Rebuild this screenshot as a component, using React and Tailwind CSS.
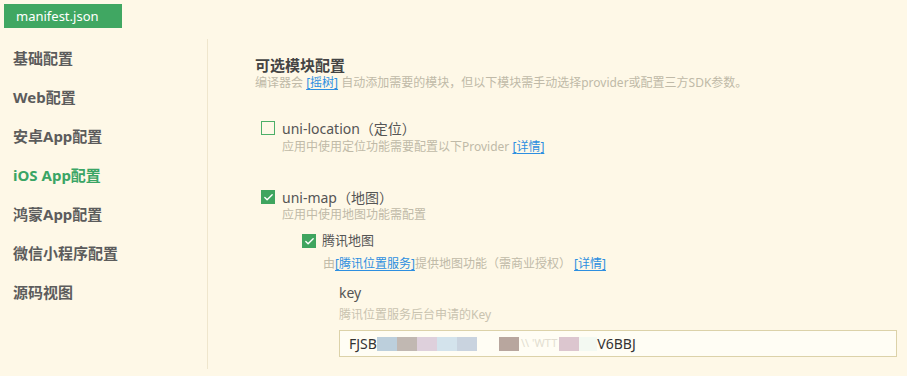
import { Check } from "lucide-react";

const navItems = ["基础配置", "Web配置", "安卓App配置", "iOS App配置", "鸿蒙App配置", "微信小程序配置", "源码视图"];

function Box({ checked }) {
  return checked ? (
    <span className="w-[14px] h-[14px] bg-[#3fa55f] flex items-center justify-center shrink-0">
      <Check size={11} strokeWidth={3} className="text-white" />
    </span>
  ) : (
    <span className="w-[14px] h-[14px] border-[1.5px] border-[#4caf68] shrink-0" />
  );
}

function Link({ children }) {
  return <span className="text-[#2d8fe0] underline underline-offset-2">[{children}]</span>;
}

// redacted bits of the key, kept as colour blocks
const blur = ["bg-[#bccfdc]", "bg-[#c1b8b2]", "bg-[#ded0dc]", "bg-[#d3e3ec]", "bg-[#c9d3df]"];

export default function App() {
  return (
    <div
      className="w-[907px] h-[376px] overflow-hidden bg-[#fef8e7] text-[#555]"
      style={{ fontFamily: '"Noto Sans", "Noto Sans CJK SC", sans-serif' }}
    >
      <div className="pt-[4px] pl-[4px]">
        <div className="w-[118px] h-[24px] bg-[#40a762] text-white text-[13px] leading-[24px] pl-[12px]">
          manifest.json
        </div>
      </div>

      <div className="flex mt-[11px]">
        <div className="w-[208px] h-[330px] border-r border-[#efe6cd] shrink-0">
          {navItems.map((item, i) => (
            <div
              key={item}
              className={`h-[39px] flex items-center pl-[13px] text-[15px] font-bold ${
                i === 3 ? "text-[#3aa565]" : "text-[#5c5c5c]"
              }`}
            >
              {item}
            </div>
          ))}
        </div>

        <div className="flex-1 pl-[47px] pr-[10px] pt-[16px]">
          <div className="text-[15px] leading-[20px] font-bold text-[#444]">可选模块配置</div>
          <div className="text-[12px] leading-[16px] text-[#c0baa8]">
            编译器会 <Link>摇树</Link> 自动添加需要的模块，但以下模块需手动选择provider或配置三方SDK参数。
          </div>

          <div className="pl-[6px] mt-[27px]">
            <div className="flex items-center gap-[7px] h-[20px] text-[14px]">
              <Box />
              <span>uni-location（定位）</span>
            </div>
            <div className="pl-[21px] mt-[1px] text-[12px] leading-[16px] text-[#c0baa8]">
              应用中使用定位功能需要配置以下Provider <Link>详情</Link>
            </div>

            <div className="flex items-center gap-[7px] h-[20px] text-[14px] mt-[32px]">
              <Box checked />
              <span>uni-map（地图）</span>
            </div>
            <div className="pl-[21px] text-[12px] leading-[16px] text-[#c0baa8]">应用中使用地图功能需配置</div>

            <div className="pl-[41px] mt-[8px]">
              <div className="flex items-center gap-[6px] h-[20px] text-[13px]">
                <Box checked />
                <span>腾讯地图</span>
              </div>
              <div className="pl-[21px] mt-[5px] text-[12px] leading-[16px] text-[#c0baa8]">
                由<Link>腾讯位置服务</Link>提供地图功能（需商业授权） <Link>详情</Link>
              </div>
            </div>

            <div className="pl-[78px] mt-[11px]">
              <div className="text-[14px] leading-[20px]">key</div>
              <div className="mt-[4px] text-[12px] leading-[16px] text-[#c9c3b0]">腾讯位置服务后台申请的Key</div>
              <div className="mt-[7px] h-[27px] border border-[#dcd2a9] bg-[#fffdf4] flex items-center pl-[9px] text-[14px] text-[#333]">
                <span>FJSB</span>
                {blur.map((c, i) => (
                  <span key={i} className={`inline-block w-[20px] h-[14px] ${c}`} />
                ))}
                <span className="inline-block w-[22px]" />
                <span className="inline-block w-[20px] h-[14px] bg-[#b8a69e]" />
                <span className="text-[11px] text-[#e2ddd0] px-[2px]">\\ 'WTT</span>
                <span className="inline-block w-[20px] h-[14px] bg-[#dcc6cf]" />
                <span className="inline-block w-[18px] h-[14px] bg-[#f3f9f2]" />
                <span>V6BBJ</span>
              </div>
            </div>
          </div>
        </div>
      </div>
    </div>
  );
}
